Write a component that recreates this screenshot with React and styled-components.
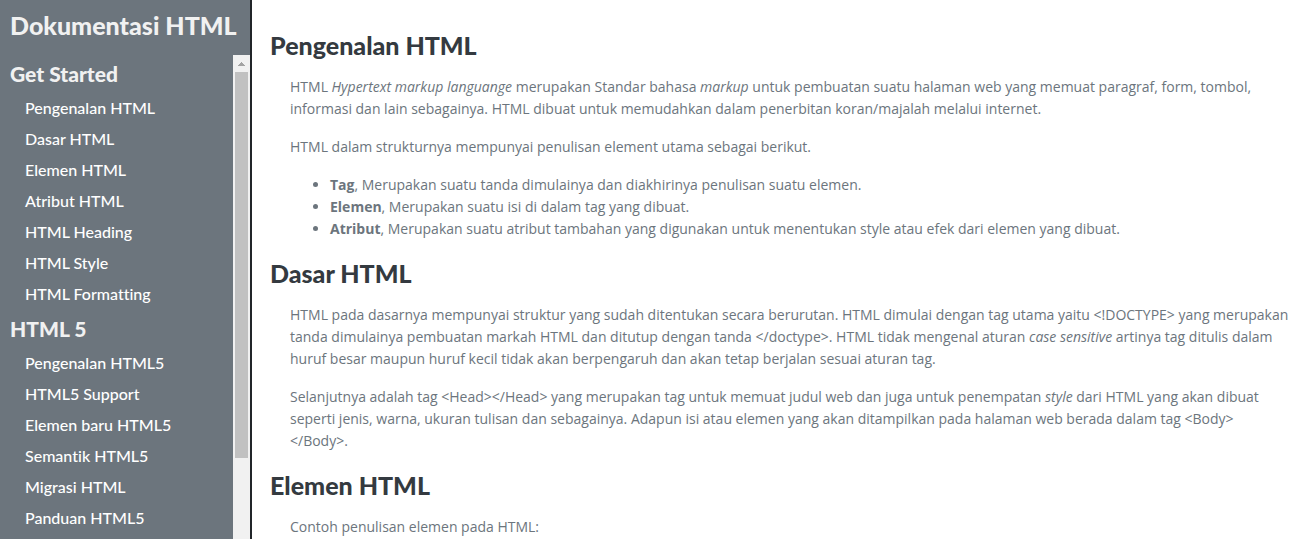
import React from 'react';
import styled, { createGlobalStyle } from 'styled-components';

const GlobalStyle = createGlobalStyle`
  * { box-sizing: border-box; }
  body {
    margin: 0;
    background: #ffffff;
    color: #6c757d;
    font: 14px/22px "Segoe UI", "Open Sans", "Noto Sans", sans-serif;
  }
`;

const humanist = '"Gill Sans MT", Lato, sans-serif';

const Page = styled.div`
  display: flex;
  height: 100vh;
`;

const Sidebar = styled.aside`
  display: flex;
  flex-direction: column;
  flex: 0 0 252px;
  overflow: hidden;
  background: #6c757d;
  border-right: 2px solid #212529;
  font-family: ${humanist};
  font-variant-ligatures: none;
`;

const SiteTitle = styled.h1`
  flex: none;
  margin: 0;
  padding: 0 10px 4px;
  color: #f1f1f1;
  font-size: 25px;
  line-height: 51px;
  font-weight: 900;
  white-space: nowrap;
`;

const MenuArea = styled.div`
  display: flex;
  flex: 0 0 100vh;
`;

const Menu = styled.nav`
  flex: 1;
  overflow-y: auto;
  scrollbar-width: none;
`;

const GroupTitle = styled.h2`
  margin: 0;
  padding-left: 10px;
  color: #f1f1f1;
  font-size: 21px;
  line-height: 38px;
  font-weight: 900;
`;

const MenuList = styled.ul`
  margin: 0;
  padding: 0;
  list-style: none;
`;

const MenuLink = styled.a`
  display: block;
  padding: 0 0 2px 25px;
  color: #ffffff;
  font-size: 16px;
  font-weight: 500;
  line-height: 29px;
  text-decoration: none;
`;

const ScrollBar = styled.div`
  flex: 0 0 17px;
  display: flex;
  flex-direction: column;
  padding: 0 2px;
  background: #f1f1f1;
`;

const ScrollArrow = styled.svg`
  display: block;
  flex: none;
  width: 13px;
  height: 17px;
  fill: #a3a3a3;
`;

const ScrollThumb = styled.div`
  height: calc((100vh - 34px) * 0.765);
  background: #c1c1c1;
`;

const Content = styled.main`
  flex: 1;
  min-width: 0;
  padding: 28px 10px 0 18px;
  overflow-y: auto;
  scrollbar-width: none;
`;

const SectionTitle = styled.h2`
  margin: 0 0 14px;
  color: #343a40;
  font-family: ${humanist};
  font-size: 25px;
  line-height: 34px;
  font-weight: 900;
`;

const SectionBody = styled.div`
  padding-left: 20px;
`;

const Paragraph = styled.p`
  margin: 0 0 16px;
`;

const BulletList = styled.ul`
  margin: 0 0 16px;
  padding-left: 40px;
`;

const groups = [
  {
    title: 'Get Started',
    items: ['Pengenalan HTML', 'Dasar HTML', 'Elemen HTML', 'Atribut HTML', 'HTML Heading', 'HTML Style', 'HTML Formatting'],
  },
  {
    title: 'HTML 5',
    items: ['Pengenalan HTML5', 'HTML5 Support', 'Elemen baru HTML5', 'Semantik HTML5', 'Migrasi HTML', 'Panduan HTML5'],
  },
];

const slug = (text) => text.toLowerCase().replace(/\s+/g, '-');

function Section({ title, children }) {
  return (
    <section id={slug(title)}>
      <SectionTitle>{title}</SectionTitle>
      <SectionBody>{children}</SectionBody>
    </section>
  );
}

export default function App() {
  return (
    <>
      <GlobalStyle />
      <Page>
        <Sidebar>
          <SiteTitle>Dokumentasi HTML</SiteTitle>
          <MenuArea>
            <Menu>
              {groups.map((group) => (
                <div key={group.title}>
                  <GroupTitle>{group.title}</GroupTitle>
                  <MenuList>
                    {group.items.map((item) => (
                      <li key={item}>
                        <MenuLink href={`#${slug(item)}`}>{item}</MenuLink>
                      </li>
                    ))}
                  </MenuList>
                </div>
              ))}
            </Menu>
            <ScrollBar aria-hidden="true">
              <ScrollArrow viewBox="0 0 13 17" shapeRendering="crispEdges">
                <path d="M6 7h1v1h1v1h1v1h1v1H3v-1h1V9h1V8h1z" />
              </ScrollArrow>
              <ScrollThumb />
            </ScrollBar>
          </MenuArea>
        </Sidebar>
        <Content>
          <Section title="Pengenalan HTML">
            <Paragraph>
              HTML <i>Hypertext markup languange</i> merupakan Standar bahasa <i>markup</i> untuk pembuatan suatu
              halaman web yang memuat paragraf, form, tombol, informasi dan lain sebagainya. HTML dibuat untuk
              memudahkan dalam penerbitan koran/majalah melalui internet.
            </Paragraph>
            <Paragraph>HTML dalam strukturnya mempunyai penulisan element utama sebagai berikut.</Paragraph>
            <BulletList>
              <li><b>Tag</b>, Merupakan suatu tanda dimulainya dan diakhirinya penulisan suatu elemen.</li>
              <li><b>Elemen</b>, Merupakan suatu isi di dalam tag yang dibuat.</li>
              <li>
                <b>Atribut</b>, Merupakan suatu atribut tambahan yang digunakan untuk menentukan style atau efek dari
                elemen yang dibuat.
              </li>
            </BulletList>
          </Section>
          <Section title="Dasar HTML">
            <Paragraph>
              HTML pada dasarnya mempunyai struktur yang sudah ditentukan secara berurutan. HTML dimulai dengan tag
              utama yaitu &lt;!DOCTYPE&gt; yang merupakan tanda dimulainya pembuatan markah HTML dan ditutup dengan
              tanda &lt;/doctype&gt;. HTML tidak mengenal aturan <i>case sensitive</i> artinya tag ditulis dalam huruf
              besar maupun huruf kecil tidak akan berpengaruh dan akan tetap berjalan sesuai aturan tag.
            </Paragraph>
            <Paragraph>
              Selanjutnya adalah tag &lt;Head&gt;&lt;/Head&gt; yang merupakan tag untuk memuat judul web dan juga untuk
              penempatan <i>style</i> dari HTML yang akan dibuat seperti jenis, warna, ukuran tulisan dan sebagainya.
              Adapun isi atau elemen yang akan ditampilkan pada halaman web berada dalam tag
              &lt;Body&gt;<wbr />&lt;/Body&gt;.
            </Paragraph>
          </Section>
          <Section title="Elemen HTML">
            <Paragraph>Contoh penulisan elemen pada HTML:</Paragraph>
          </Section>
        </Content>
      </Page>
    </>
  );
}
